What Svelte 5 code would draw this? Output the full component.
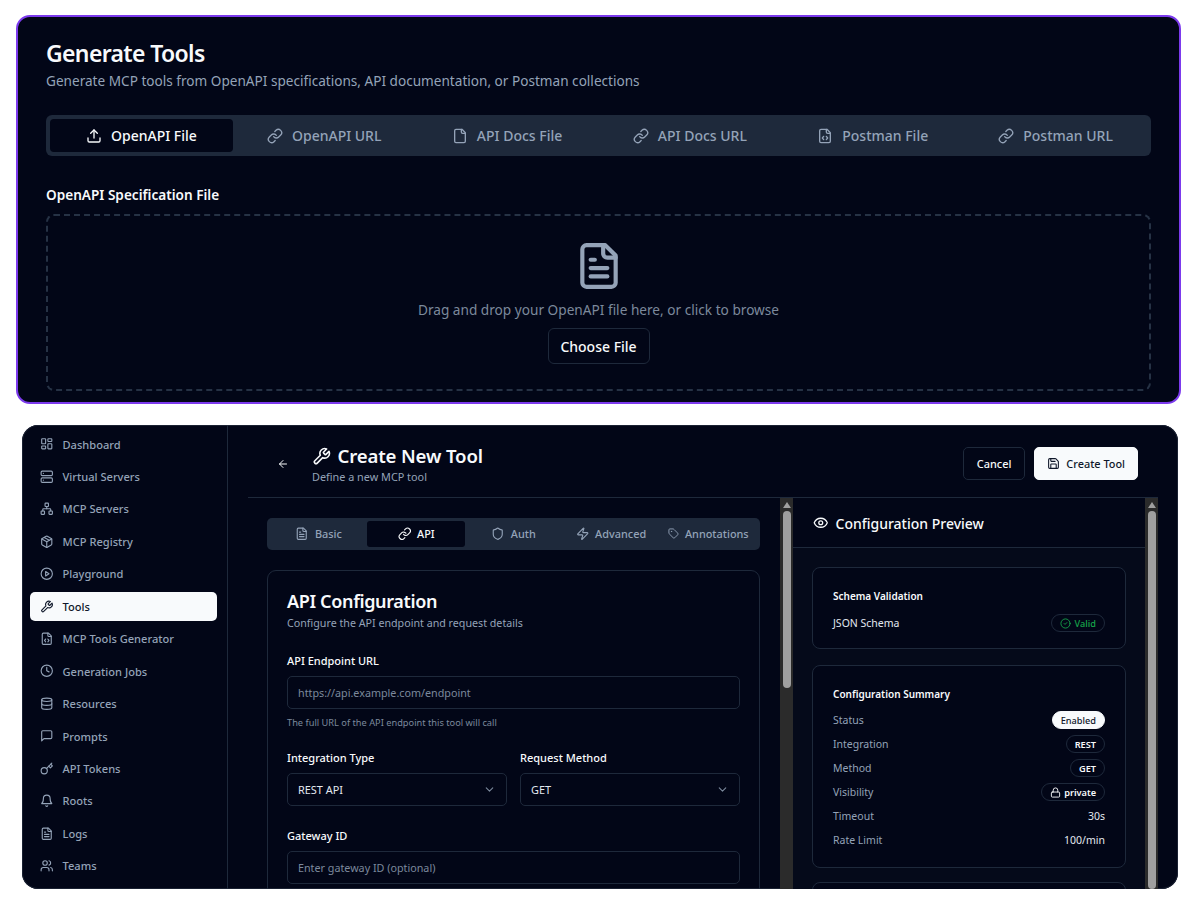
<script>
  const fileBase = '<path d="M15 2H6a2 2 0 0 0-2 2v16a2 2 0 0 0 2 2h12a2 2 0 0 0 2-2V7Z"/><path d="M14 2v4a2 2 0 0 0 2 2h4"/>';
  const icons = {
    upload: '<path d="M21 15v4a2 2 0 0 1-2 2H5a2 2 0 0 1-2-2v-4"/><polyline points="17 8 12 3 7 8"/><line x1="12" y1="3" x2="12" y2="15"/>',
    link: '<path d="M10 13a5 5 0 0 0 7.54.54l3-3a5 5 0 0 0-7.07-7.07l-1.72 1.71"/><path d="M14 11a5 5 0 0 0-7.54-.54l-3 3a5 5 0 0 0 7.07 7.07l1.71-1.71"/>',
    file: fileBase,
    fileCode: fileBase + '<path d="M10 12.5 8 15l2 2.5"/><path d="m14 12.5 2 2.5-2 2.5"/>',
    fileText: fileBase + '<path d="M10 9H8"/><path d="M16 13H8"/><path d="M16 17H8"/>',
    dashboard: '<rect x="3" y="3" width="7" height="9" rx="1"/><rect x="14" y="3" width="7" height="5" rx="1"/><rect x="14" y="12" width="7" height="9" rx="1"/><rect x="3" y="16" width="7" height="5" rx="1"/>',
    server: '<rect x="2" y="2" width="20" height="8" rx="2"/><rect x="2" y="14" width="20" height="8" rx="2"/><line x1="6" y1="6" x2="6.01" y2="6"/><line x1="6" y1="18" x2="6.01" y2="18"/>',
    network: '<rect x="16" y="16" width="6" height="6" rx="1"/><rect x="2" y="16" width="6" height="6" rx="1"/><rect x="9" y="2" width="6" height="6" rx="1"/><path d="M5 16v-3a1 1 0 0 1 1-1h12a1 1 0 0 1 1 1v3"/><path d="M12 12V8"/>',
    box: '<path d="M21 8a2 2 0 0 0-1-1.73l-7-4a2 2 0 0 0-2 0l-7 4A2 2 0 0 0 3 8v8a2 2 0 0 0 1 1.73l7 4a2 2 0 0 0 2 0l7-4A2 2 0 0 0 21 16Z"/><path d="m3.3 7 8.7 5 8.7-5"/><path d="M12 22V12"/><path d="m7.5 4.27 9 5.15"/>',
    play: '<circle cx="12" cy="12" r="10"/><polygon points="10 8 16 12 10 16 10 8"/>',
    wrench: '<path d="M14.7 6.3a1 1 0 0 0 0 1.4l1.6 1.6a1 1 0 0 0 1.4 0l3.77-3.77a6 6 0 0 1-7.94 7.94l-6.91 6.91a2.12 2.12 0 0 1-3-3l6.91-6.91a6 6 0 0 1 7.94-7.94l-3.76 3.76z"/>',
    clock: '<circle cx="12" cy="12" r="10"/><polyline points="12 6 12 12 16 14"/>',
    database: '<ellipse cx="12" cy="5" rx="9" ry="3"/><path d="M3 5V19A9 3 0 0 0 21 19V5"/><path d="M3 12A9 3 0 0 0 21 12"/>',
    message: '<path d="M21 15a2 2 0 0 1-2 2H7l-4 4V5a2 2 0 0 1 2-2h14a2 2 0 0 1 2 2z"/>',
    key: '<circle cx="7.5" cy="15.5" r="5.5"/><path d="m21 2-9.6 9.6"/><path d="m15.5 7.5 3 3L22 7l-3-3"/>',
    bell: '<path d="M6 8a6 6 0 0 1 12 0c0 7 3 9 3 9H3s3-2 3-9"/><path d="M10.3 21a1.94 1.94 0 0 0 3.4 0"/>',
    users: '<path d="M16 21v-2a4 4 0 0 0-4-4H6a4 4 0 0 0-4 4v2"/><circle cx="9" cy="7" r="4"/><path d="M22 21v-2a4 4 0 0 0-3-3.87"/><path d="M16 3.13a4 4 0 0 1 0 7.75"/>',
    shield: '<path d="M20 13c0 5-3.5 7.5-7.66 8.95a1 1 0 0 1-.67-.01C7.5 20.5 4 18 4 13V6a1 1 0 0 1 1-1c2 0 4.5-1.2 6.24-2.72a1.17 1.17 0 0 1 1.52 0C14.51 3.81 17 5 19 5a1 1 0 0 1 1 1z"/>',
    zap: '<path d="M4 14a1 1 0 0 1-.78-1.63l9.9-10.2a.5.5 0 0 1 .86.46l-1.92 6.02A1 1 0 0 0 13 10h7a1 1 0 0 1 .78 1.63l-9.9 10.2a.5.5 0 0 1-.86-.46l1.92-6.02A1 1 0 0 0 11 14z"/>',
    tag: '<path d="M12.586 2.586A2 2 0 0 0 11.172 2H4a2 2 0 0 0-2 2v7.172a2 2 0 0 0 .586 1.414l8.704 8.704a2.426 2.426 0 0 0 3.42 0l6.58-6.58a2.426 2.426 0 0 0 0-3.42z"/><circle cx="7.5" cy="7.5" r=".5"/>',
    eye: '<path d="M2.062 12.348a1 1 0 0 1 0-.696 10.75 10.75 0 0 1 19.876 0 1 1 0 0 1 0 .696 10.75 10.75 0 0 1-19.876 0"/><circle cx="12" cy="12" r="3"/>',
    save: '<path d="M15.2 3a2 2 0 0 1 1.4.6l3.8 3.8a2 2 0 0 1 .6 1.4V19a2 2 0 0 1-2 2H5a2 2 0 0 1-2-2V5a2 2 0 0 1 2-2z"/><path d="M17 21v-7a1 1 0 0 0-1-1H8a1 1 0 0 0-1 1v7"/><path d="M7 3v4a1 1 0 0 0 1 1h7"/>',
    check: '<circle cx="12" cy="12" r="10"/><path d="m9 12 2 2 4-4"/>',
    lock: '<rect x="3" y="11" width="18" height="11" rx="2"/><path d="M7 11V7a5 5 0 0 1 10 0v4"/>',
    back: '<path d="m12 19-7-7 7-7"/><path d="M19 12H5"/>',
    chevron: '<path d="m6 9 6 6 6-6"/>'
  };

  const sourceTabs = [
    { label: 'OpenAPI File', icon: 'upload', active: true },
    { label: 'OpenAPI URL', icon: 'link' },
    { label: 'API Docs File', icon: 'file' },
    { label: 'API Docs URL', icon: 'link' },
    { label: 'Postman File', icon: 'fileCode' },
    { label: 'Postman URL', icon: 'link' }
  ];

  const nav = [
    { label: 'Dashboard', icon: 'dashboard' },
    { label: 'Virtual Servers', icon: 'server' },
    { label: 'MCP Servers', icon: 'network' },
    { label: 'MCP Registry', icon: 'box' },
    { label: 'Playground', icon: 'play' },
    { label: 'Tools', icon: 'wrench', active: true },
    { label: 'MCP Tools Generator', icon: 'fileCode' },
    { label: 'Generation Jobs', icon: 'clock' },
    { label: 'Resources', icon: 'database' },
    { label: 'Prompts', icon: 'message' },
    { label: 'API Tokens', icon: 'key' },
    { label: 'Roots', icon: 'bell' },
    { label: 'Logs', icon: 'fileText' },
    { label: 'Teams', icon: 'users' }
  ];

  const formTabs = [
    { label: 'Basic', icon: 'fileText' },
    { label: 'API', icon: 'link', active: true },
    { label: 'Auth', icon: 'shield' },
    { label: 'Advanced', icon: 'zap' },
    { label: 'Annotations', icon: 'tag' }
  ];
</script>

{#snippet ic(name)}
  <svg class={name} viewBox="0 0 24 24" fill="none" stroke="currentColor" stroke-width="2" stroke-linecap="round" stroke-linejoin="round">{@html icons[name]}</svg>
{/snippet}

{#snippet scrollbar()}
  <div class="scrollbar">
    <span class="arrow"></span>
    <span class="thumb"></span>
  </div>
{/snippet}

<div class="page">
  <section class="generate">
    <h1>Generate Tools</h1>
    <p class="lead">Generate MCP tools from OpenAPI specifications, API documentation, or Postman collections</p>

    <div class="source-tabs">
      {#each sourceTabs as tab}
        <div class="source-tab" class:active={tab.active}>
          {@render ic(tab.icon)}
          <span>{tab.label}</span>
        </div>
      {/each}
    </div>

    <div class="spec-label">OpenAPI Specification File</div>
    <div class="dropzone">
      <span class="drop-icon">{@render ic('fileText')}</span>
      <p>Drag and drop your OpenAPI file here, or click to browse</p>
      <button class="choose">Choose File</button>
    </div>
  </section>

  <section class="app">
    <aside class="sidebar">
      {#each nav as item}
        <div class="nav-item" class:active={item.active}>
          {@render ic(item.icon)}
          <span>{item.label}</span>
        </div>
      {/each}
    </aside>

    <main class="main">
      <header class="head">
        <span class="back">{@render ic('back')}</span>
        <div class="head-text">
          <h2><span class="head-icon">{@render ic('wrench')}</span>Create New Tool</h2>
          <p>Define a new MCP tool</p>
        </div>
        <div class="head-actions">
          <button class="btn">Cancel</button>
          <button class="btn primary">{@render ic('save')}Create Tool</button>
        </div>
      </header>

      <div class="split">
        <div class="form-col">
          <div class="form-inner">
            <div class="form-tabs">
              {#each formTabs as tab}
                <div class="form-tab" class:active={tab.active}>
                  {@render ic(tab.icon)}
                  <span>{tab.label}</span>
                </div>
              {/each}
            </div>

            <div class="form-card">
              <h3>API Configuration</h3>
              <p class="card-sub">Configure the API endpoint and request details</p>

              <div class="field-label first">API Endpoint URL</div>
              <div class="input placeholder">https://api.example.com/endpoint</div>
              <p class="help">The full URL of the API endpoint this tool will call</p>

              <div class="two">
                <div>
                  <div class="field-label">Integration Type</div>
                  <div class="input select">REST API {@render ic('chevron')}</div>
                </div>
                <div>
                  <div class="field-label">Request Method</div>
                  <div class="input select">GET {@render ic('chevron')}</div>
                </div>
              </div>

              <div class="field-label gateway">Gateway ID</div>
              <div class="input placeholder">Enter gateway ID (optional)</div>
            </div>
          </div>
          {@render scrollbar()}
        </div>

        <div class="preview-col">
          <div class="preview">
            <div class="preview-head">
              {@render ic('eye')}
              <span>Configuration Preview</span>
            </div>
            <div class="preview-body">
              <div class="p-card schema">
                <h4>Schema Validation</h4>
                <div class="row">
                  <span class="strong">JSON Schema</span>
                  <span class="badge valid">{@render ic('check')}Valid</span>
                </div>
              </div>

              <div class="p-card summary">
                <h4>Configuration Summary</h4>
                <div class="row"><span>Status</span><span class="badge filled">Enabled</span></div>
                <div class="row"><span>Integration</span><span class="badge">REST</span></div>
                <div class="row"><span>Method</span><span class="badge">GET</span></div>
                <div class="row"><span>Visibility</span><span class="badge">{@render ic('lock')}private</span></div>
                <div class="row"><span>Timeout</span><span class="strong">30s</span></div>
                <div class="row"><span>Rate Limit</span><span class="strong">100/min</span></div>
              </div>

              <div class="p-card stub"></div>
            </div>
          </div>
          {@render scrollbar()}
        </div>
      </div>
    </main>
  </section>
</div>

<style>
  :global(body) {
    background: #fff;
    font-family: "Noto Sans", sans-serif;
    color: #f8fafc;
  }

  .page {
    width: 1200px;
    height: 900px;
    overflow: hidden;
    box-sizing: border-box;
    padding: 15px 19px 0 16px;
  }

  p, h1, h2, h3, h4 {
    margin: 0;
  }

  svg {
    display: block;
    flex-shrink: 0;
  }

  /* top panel */
  .generate {
    height: 389px;
    box-sizing: border-box;
    background: #020617;
    border: 2px solid #7c3aed;
    border-radius: 14px;
    padding: 21px 28px 0;
  }

  h1 {
    font-size: 23px;
    line-height: 30px;
    font-weight: 600;
    letter-spacing: -0.65px;
  }

  .lead {
    margin-top: 3px;
    font-size: 13.6px;
    line-height: 20px;
    color: #94a3b8;
  }

  .source-tabs {
    margin-top: 24px;
    height: 41px;
    box-sizing: border-box;
    padding: 4px;
    display: grid;
    grid-template-columns: repeat(6, 1fr);
    background: #1e293b;
    border-radius: 6px;
  }

  .source-tab {
    display: flex;
    align-items: center;
    justify-content: center;
    gap: 9px;
    font-size: 14px;
    font-weight: 500;
    color: #94a3b8;
    border-radius: 4px;
  }

  .source-tab svg {
    width: 16px;
    height: 16px;
  }

  .source-tab.active {
    background: #020617;
    color: #f8fafc;
  }

  .spec-label {
    margin-top: 29px;
    font-size: 13.6px;
    line-height: 20px;
    font-weight: 600;
  }

  .dropzone {
    margin-top: 9px;
    height: 177px;
    box-sizing: border-box;
    border: 2px dashed #263245;
    border-radius: 8px;
    display: flex;
    flex-direction: column;
    align-items: center;
    padding-top: 25px;
    color: #94a3b8;
  }

  .drop-icon svg {
    width: 50px;
    height: 50px;
  }

  .dropzone p {
    margin-top: 9px;
    font-size: 13.65px;
    line-height: 20px;
    color: #7c899c;
  }

  .choose {
    margin-top: 8px;
    width: 102px;
    height: 36px;
    background: #020617;
    border: 1px solid #1e293b;
    border-radius: 6px;
    color: #f8fafc;
    font: 500 14px "Noto Sans", sans-serif;
  }

  /* bottom panel */
  .app {
    margin: 21px 3px 0 6px;
    height: 464px;
    display: flex;
    background: #020617;
    border-radius: 16px;
    overflow: hidden;
    box-shadow: inset 0 0 0 1px #1a2132;
  }

  .sidebar {
    width: 206px;
    flex-shrink: 0;
    box-sizing: border-box;
    padding: 5px 10px 0 8px;
    border-right: 1px solid #1e293b;
    display: flex;
    flex-direction: column;
    gap: 3.46px;
  }

  .nav-item {
    height: 29px;
    flex-shrink: 0;
    box-sizing: border-box;
    display: flex;
    align-items: center;
    gap: 9px;
    padding: 0 0 1px 10px;
    border-radius: 5px;
    font-size: 11.1px;
    font-weight: 500;
    color: #94a3b8;
  }

  .nav-item svg {
    width: 13.5px;
    height: 13.5px;
  }

  .nav-item.active {
    background: #f8fafc;
    color: #0f172a;
  }

  .main {
    flex: 1;
    min-width: 0;
    padding: 0 20px;
    display: flex;
    flex-direction: column;
  }

  .head {
    height: 73px;
    flex-shrink: 0;
    box-sizing: border-box;
    border-bottom: 1px solid #1e293b;
    display: flex;
    align-items: center;
    padding: 5px 20px 0 29px;
  }

  .back {
    width: 12px;
    margin-right: 23px;
  }

  .back svg {
    width: 12px;
    height: 12px;
  }

  .head-text h2 {
    display: flex;
    align-items: center;
    gap: 6.5px;
    font-size: 18.6px;
    line-height: 26px;
    font-weight: 600;
    letter-spacing: -0.15px;
  }

  .head-icon svg {
    width: 19px;
    height: 19px;
  }

  .head-text p {
    font-size: 10.85px;
    line-height: 15px;
    color: #94a3b8;
  }

  .head-actions {
    margin-left: auto;
    display: flex;
    gap: 9px;
  }

  .btn {
    height: 33px;
    padding: 0 13px;
    display: flex;
    align-items: center;
    gap: 6px;
    background: #020617;
    border: 1px solid #1e293b;
    border-radius: 5px;
    color: #f8fafc;
    font: 500 10.9px "Noto Sans", sans-serif;
  }

  .btn svg {
    width: 13px;
    height: 13px;
  }

  .btn.primary {
    padding: 0 12px;
    background: #f8fafc;
    border-color: #f8fafc;
    color: #0f172a;
  }

  .split {
    flex: 1;
    min-height: 0;
    display: flex;
  }

  .form-col {
    width: 545px;
    flex-shrink: 0;
    display: flex;
    overflow: hidden;
  }

  .form-inner {
    flex: 1;
    min-width: 0;
    padding: 20px 20px 0 19px;
  }

  .scrollbar {
    width: 13px;
    flex-shrink: 0;
    background: #2b2b2b;
    display: flex;
    flex-direction: column;
    align-items: center;
    padding-top: 4px;
    gap: 3px;
  }

  .arrow {
    width: 0;
    height: 0;
    border-left: 4px solid transparent;
    border-right: 4px solid transparent;
    border-bottom: 6px solid #9f9f9f;
  }

  .thumb {
    width: 8px;
    height: 177px;
    background: #9f9f9f;
    border-radius: 4px;
  }

  .preview-col .thumb {
    height: 400px;
  }

  .form-tabs {
    height: 32px;
    box-sizing: border-box;
    padding: 3px;
    display: grid;
    grid-template-columns: repeat(5, 1fr);
    background: #1e293b;
    border-radius: 5px;
  }

  .form-tab {
    display: flex;
    align-items: center;
    justify-content: center;
    gap: 6px;
    padding-bottom: 1px;
    font-size: 10.9px;
    font-weight: 500;
    color: #94a3b8;
    border-radius: 3px;
  }

  .form-tab svg {
    width: 13.5px;
    height: 13.5px;
  }

  .form-tab svg.tag {
    width: 11px;
    height: 11px;
  }

  .form-tab.active {
    background: #020617;
    color: #f8fafc;
  }

  .form-card {
    margin-top: 20px;
    height: 340px;
    box-sizing: border-box;
    border: 1px solid #1e293b;
    border-radius: 9px;
    padding: 18px 19px 0;
  }

  h3 {
    font-size: 18px;
    line-height: 24px;
    font-weight: 600;
    letter-spacing: -0.35px;
  }

  .card-sub {
    font-size: 10.7px;
    line-height: 16px;
    margin-top: 2px;
    color: #94a3b8;
  }

  .field-label {
    font-size: 11px;
    line-height: 13px;
    font-weight: 500;
    margin-bottom: 9px;
  }

  .field-label.first {
    margin-top: 23px;
  }

  .field-label.gateway {
    margin-top: 23px;
  }

  .input {
    height: 33px;
    box-sizing: border-box;
    border: 1px solid #1e293b;
    border-radius: 5px;
    padding: 0 10px;
    display: flex;
    align-items: center;
    font-size: 10.9px;
    color: #e2e8f0;
  }

  .input.placeholder {
    font-size: 10.75px;
    color: #7c899c;
  }

  .select {
    justify-content: space-between;
  }

  .select svg {
    width: 13px;
    height: 13px;
    color: #7c899c;
  }

  .help {
    margin-top: 7px;
    font-size: 9.25px;
    line-height: 13px;
    color: #7c899c;
  }

  .two {
    margin-top: 22px;
    display: grid;
    grid-template-columns: 1fr 1fr;
    gap: 13px;
  }

  .preview-col {
    flex: 1;
    min-width: 0;
    display: flex;
    overflow: hidden;
  }

  .preview {
    flex: 1;
    min-width: 0;
  }

  .preview-head {
    height: 50px;
    box-sizing: border-box;
    border-bottom: 1px solid #1e293b;
    padding: 1px 20px 0;
    display: flex;
    align-items: center;
    gap: 7px;
    font-size: 14px;
    font-weight: 500;
  }

  .preview-head svg {
    width: 15.5px;
    height: 15.5px;
  }

  .preview-body {
    height: 400px;
    background: #050a1a;
    padding: 19px 19px 0;
    display: flex;
    flex-direction: column;
    gap: 16px;
  }

  .p-card {
    background: #020617;
    border: 1px solid #1e293b;
    border-radius: 8px;
    box-sizing: border-box;
    padding: 21px 20px 0;
    flex-shrink: 0;
  }

  .schema {
    height: 82px;
  }

  .summary {
    height: 203px;
  }

  .stub {
    height: 60px;
    margin-top: -2px;
  }

  h4 {
    font-size: 10px;
    line-height: 14px;
    font-weight: 600;
  }

  .row {
    display: flex;
    justify-content: space-between;
    align-items: center;
    font-size: 10.5px;
    color: #94a3b8;
  }

  .schema .row {
    margin-top: 11px;
  }

  .summary .row {
    margin-top: 6px;
    min-height: 18px;
  }

  .summary h4 {
    margin-bottom: 10px;
  }

  .strong {
    color: #e2e8f0;
  }

  .badge {
    height: 18px;
    box-sizing: border-box;
    padding: 0 8px;
    display: inline-flex;
    align-items: center;
    gap: 3.5px;
    border: 1px solid #1e293b;
    border-radius: 9px;
    font-size: 9.2px;
    font-weight: 600;
    color: #f8fafc;
  }

  .badge svg {
    width: 11px;
    height: 11px;
  }

  .badge.filled {
    background: #f8fafc;
    border-color: #f8fafc;
    color: #0f172a;
    font-weight: 500;
  }

  .badge.valid {
    color: #16a34a;
    font-weight: 500;
  }
</style>
